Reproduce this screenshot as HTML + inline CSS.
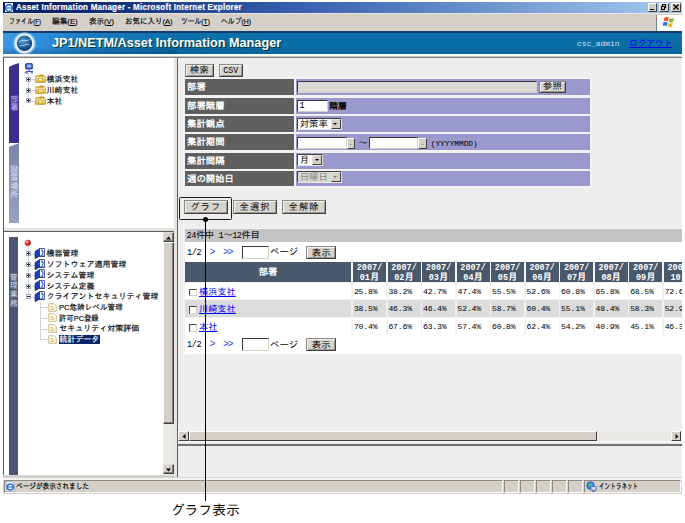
<!DOCTYPE html>
<html lang="ja">
<head>
<meta charset="utf-8">
<title>Asset Information Manager</title>
<style>
*{box-sizing:border-box;margin:0;padding:0}
html,body{width:685px;height:523px;overflow:hidden;background:#fff}
body{position:relative;font-family:"Liberation Sans","IPAGothic",sans-serif;font-size:8px;color:#000;line-height:1}
.abs{position:absolute}
.ui{font-family:"Liberation Sans","IPAGothic",sans-serif;font-size:8px;white-space:nowrap;-webkit-text-stroke:0.150px currentColor}
.mono{font-family:"Liberation Mono","IPAGothic",monospace;white-space:nowrap}
/* window chrome */
#titlebar{left:3px;top:2px;width:679px;height:11px;background:linear-gradient(to right,#0a246a 0%,#0a246a 8%,#3a62b0 45%,#a6caf0 100%)}
#titletext{left:16px;top:3.600px;color:#fff;font-weight:bold;font-size:8px;letter-spacing:0.245px;transform-origin:0 50%;transform:scaleY(1.18)}
.wbtn{top:2.500px;height:9px;background:#d4d0c8;border:1px solid;border-color:#fff #404040 #404040 #fff}
#menubar{left:3px;top:13px;width:679px;height:18px;background:#d4d0c8;border-top:1px solid #e8e6e0}
.menu{top:18px;font-size:8px;transform-origin:0 50%}
#logo{left:656px;top:15px;width:26px;height:15.800px;background:#fff;border-left:1px solid #808080}
#banner{left:3px;top:30.800px;width:679px;height:23.200px;background:linear-gradient(to bottom,#0c70aa 0,#0b6da6 60%,#0a6499 100%);border-top:2px solid #163c6c}
#bannerglow{left:3px;top:32.800px;width:175px;height:21.200px;background:linear-gradient(to bottom,rgba(0,20,60,0) 0,rgba(0,20,60,0) 65%,rgba(0,20,60,.22) 100%),linear-gradient(to right,#3a98e4 0%,#2f8edc 22%,rgba(28,126,196,.85) 50%,rgba(11,109,166,0) 100%)}
#btitle{left:52px;top:36px;color:#fff;font:bold 12.700px "Liberation Sans",sans-serif;text-shadow:1px 1px 1px #033;white-space:nowrap}

.btn{position:absolute;overflow:hidden;background:#d8d4cc;border:1px solid;border-color:#8a8a8a #404040 #404040 #8a8a8a;box-shadow:inset 1px 1px 0 #f4f2ee,inset -1px -1px 0 #9a9890;font-family:"Liberation Mono","IPAGothic",monospace;font-size:9.400px;text-align:center;white-space:nowrap;color:#000}
.lab{position:absolute;left:7px;width:109.200px;height:16.700px;background:#5f5f5f;color:#fff;font-family:"Liberation Mono","IPAGothic",monospace;font-weight:bold;font-size:9.400px;line-height:18.400px;padding-left:2px;white-space:nowrap;overflow:hidden}
.val{position:absolute;left:117.700px;width:294.600px;height:16.700px;background:#9999cc}
.inp{position:absolute;background:#fff;border:1px solid;border-width:1.300px 1px 1px 1.300px;border-color:#383838 #d4d0c8 #d4d0c8 #383838;height:12.400px;top:2.200px}
.sel{position:absolute;background:#fff;border:1px solid;border-color:#404040 #e8e6e0 #e8e6e0 #404040;height:12px;top:1.400px;font-family:"Liberation Mono","IPAGothic",monospace;font-size:9.400px;line-height:12.500px;padding-left:1.500px;white-space:nowrap;overflow:hidden}
.sel i{position:absolute;right:0;top:0;width:10px;height:10px;background:#d4d0c8;border:1px solid;border-color:#e4e2dc #404040 #404040 #e4e2dc}
.sel i:after{content:"";position:absolute;left:1.600px;top:3px;border:2.400px solid transparent;border-top:2.800px solid #000;border-bottom:0}
.sel.dis{background:#d8d6d0;color:#8a8a8a}
.sel.dis i:after{border-top-color:#808080}
.sbtn{position:absolute;top:3.200px;width:8.500px;height:11px;background:#d4d0c8;border:1px solid;border-color:#fff #404040 #404040 #fff;font-size:5px;line-height:9px;text-align:center}
.m{font-family:"Liberation Mono","IPAGothic",monospace;font-size:7.850px}
.g{font-family:"Liberation Mono","IPAGothic",monospace;font-size:9.400px}
.hd{position:absolute;top:204px;height:20px;background:#49586b;color:#fff;font-weight:bold;font-family:"Liberation Mono","IPAGothic",monospace;font-size:8.500px;line-height:9.300px;text-align:center;white-space:nowrap;padding-top:1.800px;overflow:hidden}
.hd b{font-size:9.400px}
.c{position:absolute;height:16.700px;font-family:"Liberation Mono","IPAGothic",monospace;font-size:8.100px;letter-spacing:-0.150px;line-height:17.900px;padding-left:0.900px;white-space:nowrap;overflow:hidden}
.r1 .c{background:#fff}.r2 .c{background:#dcdcdc}
.row{position:absolute;left:0;width:600px;height:16.700px}
.cb{display:inline-block;width:7.800px;height:7.800px;background:#fff;border:1px solid;border-width:1.200px 1px 1px 1.200px;border-color:#484848 #d4d0c8 #d4d0c8 #484848;vertical-align:-1.700px;margin:0 2.200px 0 2.500px}
.lk{color:#0000ee;text-decoration:underline;font-family:"Liberation Mono","IPAGothic",monospace;font-size:9.200px;letter-spacing:0}
.pg{position:absolute;left:7px;width:600px;height:20.400px;background:#fff}
.pg span{position:absolute;white-space:nowrap}
</style>
</head>
<body>
<svg width="0" height="0" style="position:absolute"><defs><linearGradient id="fg" x1="0" y1="0" x2="0" y2="1"><stop offset="0" stop-color="#fbeaa0"/><stop offset="1" stop-color="#dcaa28"/></linearGradient></defs></svg>
<!-- title bar -->
<div class="abs" id="titlebar"></div>
<svg class="abs" style="left:4px;top:3px" width="10" height="9" viewBox="0 0 10 9"><rect x="1" y="0" width="8" height="9" fill="#fff"/><circle cx="5" cy="5" r="3.4" fill="none" stroke="#2a6ad0" stroke-width="1.6"/><path d="M1 5h8" stroke="#2a6ad0" stroke-width="1.2"/></svg>
<div class="abs ui" id="titletext">Asset Information Manager - Microsoft Internet Explorer</div>
<div class="abs wbtn" style="left:648.300px;width:9px"><div class="abs" style="left:1px;top:5px;width:4px;height:1.5px;background:#000"></div></div>
<div class="abs wbtn" style="left:659.300px;width:9.300px"><div class="abs" style="left:2px;top:0.5px;width:4px;height:3.5px;border:1px solid #000;border-top-width:1.5px"></div><div class="abs" style="left:0.5px;top:2.5px;width:4px;height:3.5px;border:1px solid #000;border-top-width:1.5px;background:#d4d0c8"></div></div>
<div class="abs wbtn" style="left:670.600px;width:10px"><svg class="abs" style="left:1px;top:0.5px" width="6" height="6" viewBox="0 0 6 6"><path d="M0.5 0.5L5.5 5.5M5.5 0.5L0.5 5.5" stroke="#000" stroke-width="1.4"/></svg></div>
<!-- menu bar -->
<div class="abs" id="menubar"></div>
<div class="abs ui menu" style="left:8.800px;transform:scaleX(.756)">ファイル(<u>F</u>)</div>
<div class="abs ui menu" style="left:52.300px;transform:scaleX(.96)">編集(<u>E</u>)</div>
<div class="abs ui menu" style="left:89.200px;transform:scaleX(.94)">表示(<u>V</u>)</div>
<div class="abs ui menu" style="left:124.500px;transform:scaleX(.937)">お気に入り(<u>A</u>)</div>
<div class="abs ui menu" style="left:181px;transform:scaleX(.848)">ツール(<u>T</u>)</div>
<div class="abs ui menu" style="left:221px;transform:scaleX(.855)">ヘルプ(<u>H</u>)</div>
<div class="abs" id="logo"><svg class="abs" style="left:6px;top:1px" width="13" height="12" viewBox="0 0 13 12"><path d="M1.5 1.5q2.2-1.2 4.3 0l-.9 3.9q-2.100-1.200-4.300 0z" fill="#e8562a"/><path d="M6.700 1.900q2.200 1.200 4.300 0l-.9 3.900q-2.100 1.200-4.300 0z" fill="#7ab83a"/><path d="M.4 6.300q2.200-1.200 4.300 0l-.9 3.900q-2.100-1.200-4.300 0z" fill="#3a78d8"/><path d="M5.600 6.700q2.200 1.200 4.300 0l-.9 3.900q-2.100 1.200-4.300 0z" fill="#f0b820"/></svg></div>
<!-- banner -->
<div class="abs" id="banner"></div>
<div class="abs" id="bannerglow"></div>
<svg class="abs" style="left:11px;top:32.300px" width="28" height="22" viewBox="0 0 28 22"><defs><radialGradient id="gl" cx="50%" cy="50%" r="50%"><stop offset="0.62" stop-color="#ffffff" stop-opacity="1"/><stop offset="0.8" stop-color="#e6f4ff" stop-opacity="0.85"/><stop offset="1" stop-color="#8cc8f8" stop-opacity="0"/></radialGradient><radialGradient id="gb" cx="40%" cy="35%" r="65%"><stop offset="0" stop-color="#5aa0d8"/><stop offset="0.6" stop-color="#1f5f9a"/><stop offset="1" stop-color="#123f70"/></radialGradient></defs><circle cx="13.500" cy="11.300" r="12" fill="url(#gl)"/><circle cx="13.500" cy="11.300" r="7.700" fill="url(#gb)"/><path d="M8 10q3-2.500 6-1.500t5-1.500M8.500 13.500q3 1 5.500-.5t4.500 0" stroke="#bfe0f5" stroke-width="1" fill="none" opacity=".8"/></svg>
<div class="abs" id="btitle">JP1/NETM/Asset Information Manager</div>
<div class="abs mono" style="left:577px;top:39.500px;color:#cfe0ec;font-size:7.850px">csc_admin</div>
<div class="abs ui" style="left:629px;top:38.700px;color:#0000ee;font-size:8.700px;text-decoration:underline;-webkit-text-stroke:0;font-family:'Liberation Sans','IPAGothic',sans-serif">ログアウト</div>
<!-- frame borders -->
<div class="abs" style="left:3px;top:54px;width:679px;height:4px;background:linear-gradient(to bottom,#fff 0,#fff 45%,#b0aca4 70%,#606060 100%)"></div>
<div class="abs" style="left:2.700px;top:57px;width:1.300px;height:418px;background:#5a5a5a"></div>
<!-- left-top frame -->
<div class="abs" id="lt" style="left:4px;top:58px;width:170px;height:170px;background:#fff;overflow:hidden">
  <svg class="abs" style="left:5px;top:5px" width="11" height="161" viewBox="0 0 11 161">
    <defs><linearGradient id="tg2" x1="0" y1="0" x2="0" y2="1"><stop offset="0" stop-color="#7a84aa"/><stop offset="1" stop-color="#98a2c4"/></linearGradient></defs>
    <path d="M0 4Q4 1.500 10 0V80H0z" fill="#3b2d8e"/>
    <path d="M0 84Q4 81.500 10 80.500V160H0z" fill="url(#tg2)"/>
  </svg>
  <div class="abs ui" style="left:6.200px;top:37.500px;width:8px;color:#cdc6f2;font-size:8.200px;line-height:8.300px;-webkit-text-stroke:0">部<br>署</div>
  <div class="abs ui" style="left:6.200px;top:107.500px;width:8px;color:#e2e5f2;font-size:8.200px;line-height:8.600px;-webkit-text-stroke:0">設<br>置<br>場<br>所</div><svg style="position:absolute;left:20px;top:4.500px" width="11" height="11" viewBox="0 0 11 11"><rect x="1.500" y="0.500" width="7" height="5.500" rx="1" fill="#2a50d0" stroke="#0a1c6a" stroke-width="0.6"/><rect x="3" y="1.600" width="4.200" height="3" fill="#9cc4ff"/><path d="M5 6v2M2 8.500h7M0.500 9.800h3.500M6.500 9.800h2.500" stroke="#2858c8" stroke-width="1"/></svg><div style="position:absolute;left:24px;top:15px;width:0;height:28.0px;border-left:1px solid #d0d4da"></div><div style="position:absolute;left:27.0px;top:21.4px;width:4.0px;height:0;border-top:1px solid #d0d4da"></div><div style="position:absolute;left:22px;top:19px;width:5px;height:5px;background:#fff;border:1px solid #a4acbc"><div style="position:absolute;left:0;top:1px;width:3px;height:1px;background:#222"></div><div style="position:absolute;left:1px;top:0;width:1px;height:3px;background:#222"></div></div><svg style="position:absolute;left:30.8px;top:16.4px" width="11" height="9" viewBox="0 0 11 9"><path d="M0.500 2.500Q0.500 1.500 1.500 1.500H4L5 0.600H8Q9 0.600 9 1.500V2.500z" fill="#c89a20"/><rect x="0.300" y="2.200" width="10.200" height="6.400" rx="1.200" fill="url(#fg)" stroke="#b08418" stroke-width="0.6"/><rect x="3.200" y="4.300" width="4.300" height="2.600" fill="#fff6c8" stroke="#b08418" stroke-width="0.4"/></svg><div class="ui" style="position:absolute;left:42.400px;top:16.9px;font-size:8px;line-height:9px;">横浜支社</div><div style="position:absolute;left:27.0px;top:32.2px;width:4.0px;height:0;border-top:1px solid #d0d4da"></div><div style="position:absolute;left:22px;top:30px;width:5px;height:5px;background:#fff;border:1px solid #a4acbc"><div style="position:absolute;left:0;top:1px;width:3px;height:1px;background:#222"></div><div style="position:absolute;left:1px;top:0;width:1px;height:3px;background:#222"></div></div><svg style="position:absolute;left:30.8px;top:27.2px" width="11" height="9" viewBox="0 0 11 9"><path d="M0.500 2.500Q0.500 1.500 1.500 1.500H4L5 0.600H8Q9 0.600 9 1.500V2.500z" fill="#c89a20"/><rect x="0.300" y="2.200" width="10.200" height="6.400" rx="1.200" fill="url(#fg)" stroke="#b08418" stroke-width="0.6"/><rect x="3.200" y="4.300" width="4.300" height="2.600" fill="#fff6c8" stroke="#b08418" stroke-width="0.4"/></svg><div class="ui" style="position:absolute;left:42.400px;top:27.7px;font-size:8px;line-height:9px;">川崎支社</div><div style="position:absolute;left:27.0px;top:43.0px;width:4.0px;height:0;border-top:1px solid #d0d4da"></div><div style="position:absolute;left:22px;top:40px;width:5px;height:5px;background:#fff;border:1px solid #a4acbc"><div style="position:absolute;left:0;top:1px;width:3px;height:1px;background:#222"></div><div style="position:absolute;left:1px;top:0;width:1px;height:3px;background:#222"></div></div><svg style="position:absolute;left:30.8px;top:38.0px" width="11" height="9" viewBox="0 0 11 9"><path d="M0.500 2.500Q0.500 1.500 1.500 1.500H4L5 0.600H8Q9 0.600 9 1.500V2.500z" fill="#c89a20"/><rect x="0.300" y="2.200" width="10.200" height="6.400" rx="1.200" fill="url(#fg)" stroke="#b08418" stroke-width="0.6"/><rect x="3.200" y="4.300" width="4.300" height="2.600" fill="#fff6c8" stroke="#b08418" stroke-width="0.4"/></svg><div class="ui" style="position:absolute;left:42.400px;top:38.5px;font-size:8px;line-height:9px;">本社</div>
</div>
<!-- left-bottom frame -->
<div class="abs" style="left:4px;top:228px;width:170px;height:4px;background:linear-gradient(to bottom,#e8e6e0 0,#e8e6e0 60%,#606060 80%,#606060 100%)"></div>
<div class="abs" id="lb" style="left:4px;top:232px;width:170px;height:242.600px;background:#fff;overflow:hidden">
  <div class="abs" style="left:5.300px;top:5.300px;width:8.800px;height:237.300px;background:#4b5674"></div>
  <div class="abs ui" style="left:5.800px;top:41.500px;width:8px;color:#dde1ec;font-size:8px;line-height:8.700px;-webkit-text-stroke:0">管<br>理<br>業<br>務</div><svg style="position:absolute;left:19.800px;top:6.800px" width="7.500" height="7.500" viewBox="0 0 8 8"><defs><radialGradient id="rb" cx="35%" cy="35%" r="70%"><stop offset="0" stop-color="#ffd0c0"/><stop offset="0.45" stop-color="#e04030"/><stop offset="1" stop-color="#901810"/></radialGradient></defs><circle cx="4" cy="4" r="3.300" fill="url(#rb)"/></svg><div style="position:absolute;left:24px;top:14px;width:0;height:50.6px;border-left:1px solid #d0d4da"></div><div style="position:absolute;left:27.0px;top:21.9px;width:4.0px;height:0;border-top:1px solid #d0d4da"></div><div style="position:absolute;left:22px;top:19px;width:5px;height:5px;background:#fff;border:1px solid #a4acbc"><div style="position:absolute;left:0;top:1px;width:3px;height:1px;background:#222"></div><div style="position:absolute;left:1px;top:0;width:1px;height:3px;background:#222"></div></div><svg style="position:absolute;left:30.2px;top:16.1px" width="12" height="11" viewBox="0 0 12 11"><path d="M1 3.500L5.500 0.500V8L1 10.500z" fill="#1440c8" stroke="#0a1c6a" stroke-width="0.6"/><path d="M5.500 0.500H10.500V8.500H5.500z" fill="#fff" stroke="#0a1c6a" stroke-width="0.7"/><path d="M7 1.500Q9.500 2.500 9 5T7 7.500" fill="none" stroke="#2a58d8" stroke-width="1.100"/><path d="M1 10.500L5.500 8H10.500" fill="none" stroke="#0a1c6a" stroke-width="0.7"/></svg><div class="ui" style="position:absolute;left:42.400px;top:17.4px;font-size:8px;line-height:9px;">機器管理</div><div style="position:absolute;left:27.0px;top:32.5px;width:4.0px;height:0;border-top:1px solid #d0d4da"></div><div style="position:absolute;left:22px;top:30px;width:5px;height:5px;background:#fff;border:1px solid #a4acbc"><div style="position:absolute;left:0;top:1px;width:3px;height:1px;background:#222"></div><div style="position:absolute;left:1px;top:0;width:1px;height:3px;background:#222"></div></div><svg style="position:absolute;left:30.2px;top:26.7px" width="12" height="11" viewBox="0 0 12 11"><path d="M1 3.500L5.500 0.500V8L1 10.500z" fill="#1440c8" stroke="#0a1c6a" stroke-width="0.6"/><path d="M5.500 0.500H10.500V8.500H5.500z" fill="#fff" stroke="#0a1c6a" stroke-width="0.7"/><path d="M7 1.500Q9.500 2.500 9 5T7 7.500" fill="none" stroke="#2a58d8" stroke-width="1.100"/><path d="M1 10.500L5.500 8H10.500" fill="none" stroke="#0a1c6a" stroke-width="0.7"/></svg><div class="ui" style="position:absolute;left:42.400px;top:28.0px;font-size:8px;line-height:9px;">ソフトウェア適用管理</div><div style="position:absolute;left:27.0px;top:43.2px;width:4.0px;height:0;border-top:1px solid #d0d4da"></div><div style="position:absolute;left:22px;top:41px;width:5px;height:5px;background:#fff;border:1px solid #a4acbc"><div style="position:absolute;left:0;top:1px;width:3px;height:1px;background:#222"></div><div style="position:absolute;left:1px;top:0;width:1px;height:3px;background:#222"></div></div><svg style="position:absolute;left:30.2px;top:37.4px" width="12" height="11" viewBox="0 0 12 11"><path d="M1 3.500L5.500 0.500V8L1 10.500z" fill="#1440c8" stroke="#0a1c6a" stroke-width="0.6"/><path d="M5.500 0.500H10.500V8.500H5.500z" fill="#fff" stroke="#0a1c6a" stroke-width="0.7"/><path d="M7 1.500Q9.500 2.500 9 5T7 7.500" fill="none" stroke="#2a58d8" stroke-width="1.100"/><path d="M1 10.500L5.500 8H10.500" fill="none" stroke="#0a1c6a" stroke-width="0.7"/></svg><div class="ui" style="position:absolute;left:42.400px;top:38.7px;font-size:8px;line-height:9px;">システム管理</div><div style="position:absolute;left:27.0px;top:54.0px;width:4.0px;height:0;border-top:1px solid #d0d4da"></div><div style="position:absolute;left:22px;top:52px;width:5px;height:5px;background:#fff;border:1px solid #a4acbc"><div style="position:absolute;left:0;top:1px;width:3px;height:1px;background:#222"></div><div style="position:absolute;left:1px;top:0;width:1px;height:3px;background:#222"></div></div><svg style="position:absolute;left:30.2px;top:48.2px" width="12" height="11" viewBox="0 0 12 11"><path d="M1 3.500L5.500 0.500V8L1 10.500z" fill="#1440c8" stroke="#0a1c6a" stroke-width="0.6"/><path d="M5.500 0.500H10.500V8.500H5.500z" fill="#fff" stroke="#0a1c6a" stroke-width="0.7"/><path d="M7 1.500Q9.500 2.500 9 5T7 7.500" fill="none" stroke="#2a58d8" stroke-width="1.100"/><path d="M1 10.500L5.500 8H10.500" fill="none" stroke="#0a1c6a" stroke-width="0.7"/></svg><div class="ui" style="position:absolute;left:42.400px;top:49.5px;font-size:8px;line-height:9px;">システム定義</div><div style="position:absolute;left:27.0px;top:64.6px;width:4.0px;height:0;border-top:1px solid #d0d4da"></div><div style="position:absolute;left:22px;top:62px;width:5px;height:5px;background:#fff;border:1px solid #a4acbc"><div style="position:absolute;left:0;top:1px;width:3px;height:1px;background:#222"></div></div><svg style="position:absolute;left:30.2px;top:58.8px" width="12" height="11" viewBox="0 0 12 11"><path d="M1 3.500L5.500 0.500V8L1 10.500z" fill="#1440c8" stroke="#0a1c6a" stroke-width="0.6"/><path d="M5.500 0.500H10.500V8.500H5.500z" fill="#fff" stroke="#0a1c6a" stroke-width="0.7"/><path d="M7 1.500Q9.500 2.500 9 5T7 7.500" fill="none" stroke="#2a58d8" stroke-width="1.100"/><path d="M1 10.500L5.500 8H10.500" fill="none" stroke="#0a1c6a" stroke-width="0.7"/></svg><div class="ui" style="position:absolute;left:42.400px;top:60.1px;font-size:8px;line-height:9px;">クライアントセキュリティ管理</div><div style="position:absolute;left:35.5px;top:70.0px;width:0;height:37.3px;border-left:1px solid #d0d4da"></div><div style="position:absolute;left:36.0px;top:75.2px;width:8.0px;height:0;border-top:1px solid #d0d4da"></div><svg style="position:absolute;left:44.2px;top:70.6px" width="9" height="9" viewBox="0 0 9 9"><path d="M0.700 0.700H6L8.300 3V8.300H0.700z" fill="#fffef4" stroke="#b0a060" stroke-width="0.7"/><path d="M2.300 3.500H5M2.300 5H6.500M2.300 6.500H6.500" stroke="#c8a040" stroke-width="0.6"/></svg><div class="ui" style="position:absolute;left:55.2px;top:70.7px;font-size:8px;line-height:9px;transform-origin:0 50%;transform:scaleX(.95)">PC危険レベル管理</div><div style="position:absolute;left:36.0px;top:86.0px;width:8.0px;height:0;border-top:1px solid #d0d4da"></div><svg style="position:absolute;left:44.2px;top:81.4px" width="9" height="9" viewBox="0 0 9 9"><path d="M0.700 0.700H6L8.300 3V8.300H0.700z" fill="#fffef4" stroke="#b0a060" stroke-width="0.7"/><path d="M2.300 3.500H5M2.300 5H6.500M2.300 6.500H6.500" stroke="#c8a040" stroke-width="0.6"/></svg><div class="ui" style="position:absolute;left:55.2px;top:81.5px;font-size:8px;line-height:9px;transform-origin:0 50%;transform:scaleX(.92)">許可PC登録</div><div style="position:absolute;left:36.0px;top:96.6px;width:8.0px;height:0;border-top:1px solid #d0d4da"></div><svg style="position:absolute;left:44.2px;top:92.0px" width="9" height="9" viewBox="0 0 9 9"><path d="M0.700 0.700H6L8.300 3V8.300H0.700z" fill="#fffef4" stroke="#b0a060" stroke-width="0.7"/><path d="M2.300 3.500H5M2.300 5H6.500M2.300 6.500H6.500" stroke="#c8a040" stroke-width="0.6"/></svg><div class="ui" style="position:absolute;left:55.2px;top:92.1px;font-size:8px;line-height:9px;">セキュリティ対策評価</div><div style="position:absolute;left:36.0px;top:107.3px;width:8.0px;height:0;border-top:1px solid #d0d4da"></div><svg style="position:absolute;left:44.2px;top:102.7px" width="9" height="9" viewBox="0 0 9 9"><path d="M0.700 0.700H6L8.300 3V8.300H0.700z" fill="#fffef4" stroke="#b0a060" stroke-width="0.7"/><path d="M2.300 3.500H5M2.300 5H6.500M2.300 6.500H6.500" stroke="#c8a040" stroke-width="0.6"/></svg><div style="position:absolute;left:54.500px;top:102.7px;width:41.500px;height:9.200px;background:#0a246a"></div><div class="ui" style="position:absolute;left:55.2px;top:102.8px;font-size:8px;line-height:9px;color:#fff;">統計データ</div><div style="position:absolute;left:159.300px;top:0;width:10.700px;height:244px;background:#ebe9e4"></div><div style="position:absolute;left:159.300px;top:0;width:10.700px;height:10px;background:#d4d0c8;border:1px solid;border-color:#e0ded8 #404040 #404040 #e0ded8;box-shadow:inset -1px -1px 0 #808080"><svg style="position:absolute;left:2px;top:2.500px" width="5" height="4" viewBox="0 0 5 4"><path d="M0 3.500L2.500 0.500L5 3.500z" fill="#000"/></svg></div><div style="position:absolute;left:159.300px;top:10px;width:10.700px;height:181.800px;background:#d4d0c8;border:1px solid;border-color:#fff #404040 #404040 #fff;box-shadow:inset -1px -1px 0 #808080"></div><div style="position:absolute;left:159.300px;top:231.800px;width:10.700px;height:10.300px;background:#d4d0c8;border:1px solid;border-color:#e0ded8 #404040 #404040 #e0ded8;box-shadow:inset -1px -1px 0 #808080"><svg style="position:absolute;left:2px;top:3px" width="5" height="4" viewBox="0 0 5 4"><path d="M0 0.500L2.500 3.500L5 0.500z" fill="#000"/></svg></div>
</div>
<div class="abs" style="left:3px;top:474.600px;width:175px;height:2px;background:linear-gradient(to bottom,#e4e2dc,#c4c2bc)"></div>
<!-- vertical separator -->
<div class="abs" style="left:174px;top:58px;width:4px;height:419px;background:linear-gradient(to right,#e8e6e0 0,#e8e6e0 68%,#606060 75%,#606060 100%)"></div>
<!-- right main frame -->
<div class="abs" id="rm" style="left:178px;top:58px;width:503.600px;height:383px;background:#eee;overflow:hidden">
<div class="btn" style="left:7px;top:6px;width:28.500px;height:12.800px;line-height:12.500px">検索</div>
<div class="btn m" style="left:41px;top:6px;width:23.500px;height:12.800px;line-height:12.500px;font-size:8.300px">CSV</div>
<div style="position:absolute;left:5.300px;top:19.200px;width:409.200px;height:110.400px;background:#f2f2f2"></div>
<div class="lab" style="top:20.9px;height:16.6px">部署</div>
<div class="val" style="top:20.9px;height:16.6px"><div class="inp" style="left:1.500px;width:240px;background:#dcdad6"></div><div class="btn" style="left:243px;top:2.600px;width:27.500px;height:11.800px;line-height:10.600px">参照</div></div>
<div class="lab" style="top:39.7px;height:16.4px">部署階層</div>
<div class="val" style="top:39.7px;height:16.4px"><div class="inp" style="left:1.500px;width:31px"><span class="m" style="position:absolute;left:1.200px;top:1.200px;font-size:8.600px">1</span></div><span class="g" style="position:absolute;left:33.500px;top:5.800px;font-weight:bold;font-size:8.800px;white-space:nowrap">階層</span></div>
<div class="lab" style="top:58.3px;height:16.0px">集計観点</div>
<div class="val" style="top:58.3px;height:16.0px"><div class="sel" style="left:1.500px;width:44.500px">対策率<i></i></div></div>
<div class="lab" style="top:76.4px;height:16.0px">集計期間</div>
<div class="val" style="top:76.4px;height:16.0px"><div class="inp" style="left:1.500px;width:49.500px"></div><div class="sbtn" style="left:51px">..</div><span class="g" style="position:absolute;left:62.500px;top:5px">～</span><div class="inp" style="left:73px;width:49.500px"></div><div class="sbtn" style="left:122.500px">..</div><span class="m" style="position:absolute;left:135px;top:6px;white-space:nowrap">(YYYYMMDD)</span></div>
<div class="lab" style="top:94.5px;height:16.0px">集計間隔</div>
<div class="val" style="top:94.5px;height:16.0px"><div class="sel" style="left:1.500px;width:25.800px">月<i></i></div></div>
<div class="lab" style="top:112.6px;height:15.3px">週の開始日</div>
<div class="val" style="top:112.6px;height:15.3px"><div class="sel dis" style="left:1.500px;top:0.900px;width:44.500px">日曜日<i></i></div></div>
<!-- action buttons -->
<div class="btn" style="left:5.600px;top:142.300px;width:44.200px;height:13.300px;line-height:13px;letter-spacing:1px">グラフ</div>
<div class="btn" style="left:55px;top:142.300px;width:44.200px;height:13.300px;line-height:13px;letter-spacing:1px">全選択</div>
<div class="btn" style="left:104px;top:142.300px;width:44.200px;height:13.300px;line-height:13px;letter-spacing:1px">全解除</div>
<!-- list -->
<div style="position:absolute;left:5.300px;top:170px;width:600px;height:127.300px;background:#f2f2f2"></div>
<div style="position:absolute;left:7px;top:171.200px;width:600px;height:12.900px;background:#c4c4c4"><span class="m" style="position:absolute;left:1.500px;top:2px;white-space:nowrap;font-size:8.600px;letter-spacing:-0.450px">24<span class="g">件中</span> 1<span class="g">～</span>12<span class="g">件目</span></span></div>
<div class="pg" style="top:184.100px;height:19.900px"><span class="m" style="left:2px;top:6.500px;font-size:8.600px;letter-spacing:-0.450px">1/2</span><span class="m" style="left:24.500px;top:5.500px;color:#3048e0;font-size:10px">&gt;</span><span class="m" style="left:38px;top:5.500px;color:#3048e0;font-size:10px;letter-spacing:-1.500px">&gt;&gt;</span><div class="inp" style="left:57.300px;top:3.500px;width:26.500px;height:13.500px"></div><span class="g" style="left:85px;top:6px">ページ</span><div class="btn" style="left:121.300px;top:3.500px;width:29.800px;height:13.300px;line-height:13px">表示</div></div>
<div class="hd" style="left:7px;width:166.200px;line-height:18px"><b>部署</b></div>
<div class="hd" style="left:175.00px;width:33.0px">2007/<br>01<b>月</b></div><div class="hd" style="left:209.53px;width:33.0px">2007/<br>02<b>月</b></div><div class="hd" style="left:244.06px;width:33.0px">2007/<br>03<b>月</b></div><div class="hd" style="left:278.59px;width:33.0px">2007/<br>04<b>月</b></div><div class="hd" style="left:313.12px;width:33.0px">2007/<br>05<b>月</b></div><div class="hd" style="left:347.65px;width:33.0px">2007/<br>06<b>月</b></div><div class="hd" style="left:382.18px;width:33.0px">2007/<br>07<b>月</b></div><div class="hd" style="left:416.71px;width:33.0px">2007/<br>08<b>月</b></div><div class="hd" style="left:451.24px;width:33.0px">2007/<br>09<b>月</b></div><div class="hd" style="left:485.77px;width:33.0px">2007/<br>10<b>月</b></div>
<div class="row r1" style="top:224.800px"><div class="c" style="left:7px;width:166.200px;line-height:20.300px;padding-left:1.500px"><span class="cb"></span><span class="lk">横浜支社</span></div><div class="c" style="left:175.00px;width:33.0px">25.8%</div><div class="c" style="left:209.53px;width:33.0px">38.2%</div><div class="c" style="left:244.06px;width:33.0px">42.7%</div><div class="c" style="left:278.59px;width:33.0px">47.4%</div><div class="c" style="left:313.12px;width:33.0px">55.5%</div><div class="c" style="left:347.65px;width:33.0px">52.6%</div><div class="c" style="left:382.18px;width:33.0px">60.8%</div><div class="c" style="left:416.71px;width:33.0px">65.8%</div><div class="c" style="left:451.24px;width:33.0px">68.5%</div><div class="c" style="left:485.77px;width:33.0px">72.6%</div></div>
<div class="row r2" style="top:242.400px"><div class="c" style="left:7px;width:166.200px;line-height:20.300px;padding-left:1.500px"><span class="cb"></span><span class="lk">川崎支社</span></div><div class="c" style="left:175.00px;width:33.0px">38.5%</div><div class="c" style="left:209.53px;width:33.0px">46.3%</div><div class="c" style="left:244.06px;width:33.0px">46.4%</div><div class="c" style="left:278.59px;width:33.0px">52.4%</div><div class="c" style="left:313.12px;width:33.0px">58.7%</div><div class="c" style="left:347.65px;width:33.0px">60.4%</div><div class="c" style="left:382.18px;width:33.0px">55.1%</div><div class="c" style="left:416.71px;width:33.0px">48.4%</div><div class="c" style="left:451.24px;width:33.0px">58.3%</div><div class="c" style="left:485.77px;width:33.0px">52.9%</div></div>
<div class="row r1" style="top:260px"><div class="c" style="left:7px;width:166.200px;line-height:20.300px;padding-left:1.500px"><span class="cb"></span><span class="lk">本社</span></div><div class="c" style="left:175.00px;width:33.0px">70.4%</div><div class="c" style="left:209.53px;width:33.0px">67.6%</div><div class="c" style="left:244.06px;width:33.0px">63.3%</div><div class="c" style="left:278.59px;width:33.0px">57.4%</div><div class="c" style="left:313.12px;width:33.0px">60.8%</div><div class="c" style="left:347.65px;width:33.0px">62.4%</div><div class="c" style="left:382.18px;width:33.0px">54.2%</div><div class="c" style="left:416.71px;width:33.0px">40.9%</div><div class="c" style="left:451.24px;width:33.0px">45.1%</div><div class="c" style="left:485.77px;width:33.0px">46.3%</div></div>
<div class="pg" style="top:277.200px;height:19.200px"><span class="m" style="left:2px;top:6px;font-size:8.600px;letter-spacing:-0.450px">1/2</span><span class="m" style="left:24.500px;top:5px;color:#3048e0;font-size:10px">&gt;</span><span class="m" style="left:38px;top:5px;color:#3048e0;font-size:10px;letter-spacing:-1.500px">&gt;&gt;</span><div class="inp" style="left:57.300px;top:2.500px;width:26.500px;height:13.500px"></div><span class="g" style="left:85px;top:5.500px">ページ</span><div class="btn" style="left:121.300px;top:2.500px;width:29.800px;height:13.300px;line-height:13px">表示</div></div>
<!-- h scrollbar -->
<div style="position:absolute;left:0;top:373px;width:503px;height:10.300px;background:#ebe9e4"></div>
<div class="sb" style="position:absolute;left:0;top:373px;width:10.500px;height:10.300px;background:#d4d0c8;border:1px solid;border-color:#fff #404040 #404040 #fff"><svg style="position:absolute;left:2.500px;top:2px" width="4" height="5" viewBox="0 0 4 5"><path d="M3.500 0L0.500 2.500L3.500 5z" fill="#000"/></svg></div>
<div style="position:absolute;left:10.500px;top:373px;width:408.500px;height:10.300px;background:#d4d0c8;border:1px solid;border-color:#fff #404040 #404040 #fff"></div>
<div class="sb" style="position:absolute;left:493px;top:373px;width:10px;height:10.300px;background:#d4d0c8;border:1px solid;border-color:#fff #404040 #404040 #fff"><svg style="position:absolute;left:3px;top:2px" width="4" height="5" viewBox="0 0 4 5"><path d="M0.500 0L3.500 2.500L0.500 5z" fill="#000"/></svg></div>
</div>
<div class="abs" style="left:178px;top:441px;width:503.600px;height:5px;background:linear-gradient(to bottom,#fff 0,#e8e6e0 50%,#707070 70%,#707070 90%,#eee 100%)"></div>
<div class="abs" id="rb" style="left:178px;top:446px;width:503.600px;height:31px;background:#eee"></div>
<!-- status bar -->
<div class="abs" style="left:3px;top:476.500px;width:679px;height:17.500px;background:linear-gradient(to bottom,#b4b2ac 0,#f2f1ee 0.9px,#f6f5f2 3.100px,#d4d0c8 3.700px,#d4d0c8 100%)"></div>
<div class="abs" style="left:3.5px;top:480.300px;width:499.0px;height:13.200px;border:1px solid;border-color:#8c8a84 #fbfaf8 #fbfaf8 #8c8a84"></div><div class="abs" style="left:504.0px;top:480.300px;width:14.6px;height:13.200px;border:1px solid;border-color:#8c8a84 #fbfaf8 #fbfaf8 #8c8a84"></div><div class="abs" style="left:520.0px;top:480.300px;width:14.6px;height:13.200px;border:1px solid;border-color:#8c8a84 #fbfaf8 #fbfaf8 #8c8a84"></div><div class="abs" style="left:536.0px;top:480.300px;width:14.6px;height:13.200px;border:1px solid;border-color:#8c8a84 #fbfaf8 #fbfaf8 #8c8a84"></div><div class="abs" style="left:552.0px;top:480.300px;width:14.6px;height:13.200px;border:1px solid;border-color:#8c8a84 #fbfaf8 #fbfaf8 #8c8a84"></div><div class="abs" style="left:568.0px;top:480.300px;width:14.6px;height:13.200px;border:1px solid;border-color:#8c8a84 #fbfaf8 #fbfaf8 #8c8a84"></div><div class="abs" style="left:584.2px;top:480.300px;width:97.3px;height:13.200px;border:1px solid;border-color:#8c8a84 #fbfaf8 #fbfaf8 #8c8a84"></div><svg class="abs" style="left:4.500px;top:481.300px" width="11" height="11" viewBox="0 0 11 11"><path d="M1.500 0.500H7L9.500 3V10.500H1.500z" fill="#fff" stroke="#8090a8" stroke-width="0.6"/><circle cx="5.300" cy="6" r="3" fill="none" stroke="#2a6ad8" stroke-width="1.500"/><path d="M2.500 6h5.500" stroke="#2a6ad8" stroke-width="1.100"/></svg><div class="abs ui" style="left:16.300px;top:482.500px;font-size:8px;transform-origin:0 50%;transform:scaleX(.83)">ページが表示されました</div><svg class="abs" style="left:585.500px;top:481px" width="11" height="11" viewBox="0 0 11 11"><circle cx="4.500" cy="4.500" r="3.800" fill="#3a8ae0" stroke="#1a4a98" stroke-width="0.6"/><path d="M2.500 3Q4 1.500 5.500 3T4 5.500z" fill="#5ac05a"/><rect x="5" y="5.500" width="5.300" height="3.800" rx="0.600" fill="#c8dcf8" stroke="#3858a0" stroke-width="0.7"/><path d="M6 10.300h3.500" stroke="#3858a0" stroke-width="0.8"/></svg><div class="abs ui" style="left:599px;top:482.500px;font-size:8px;transform-origin:0 50%;transform:scaleX(.70)">イントラネット</div><div class="abs" style="left:179.300px;top:197.200px;width:52.600px;height:22.500px;border:1.200px solid #1a1a1a;border-radius:1.500px"></div><div class="abs" style="left:205.300px;top:219px;width:1px;height:282px;background:#000"></div><div class="abs" style="left:203.200px;top:216.500px;width:5.200px;height:5.200px;border-radius:50%;background:#000"></div><div class="abs" style="left:170.800px;top:503.300px;font-family:'Liberation Sans','IPAGothic',sans-serif;font-size:13.800px;line-height:15px;white-space:nowrap">グラフ表示</div>
</body>
</html>
